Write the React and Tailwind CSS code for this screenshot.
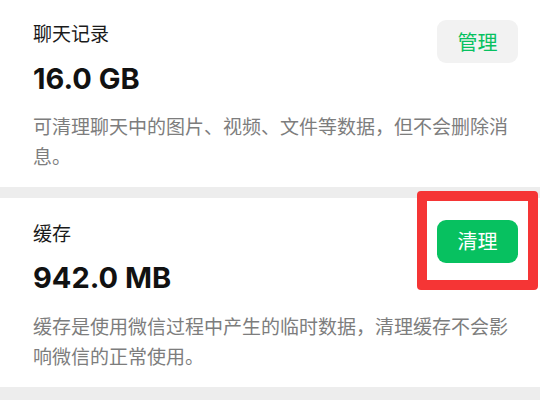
const cjk = { fontFamily: '"Noto Sans CJK SC", "Noto Sans", sans-serif' };
const num = { fontFamily: 'Inter, "Noto Sans CJK SC", sans-serif' };

function StorageItem({ title, size, desc, action, primary, highlight, top }) {
  return (
    <div className={`bg-white pl-[33px] pr-[22px] ${top}`}>
      <div className="flex items-start justify-between">
        <div>
          <p style={cjk} className="text-[19px] leading-[26px] text-[#1a1a1a]">{title}</p>
          <p style={num} className="mt-[14.5px] text-[29px] font-bold leading-[36px] text-[#111111]">{size}</p>
        </div>
        <div className="relative">
          <button
            style={cjk}
            className={
              primary
                ? "w-[81px] h-[43px] rounded-[9px] bg-[#07c160] text-white text-[20px]"
                : "w-[81px] h-[43px] rounded-[9px] bg-[#f2f2f2] text-[#07c160] text-[20px]"
            }
          >
            {action}
          </button>
          {highlight && (
            <div className="absolute -top-[29px] -bottom-[27px] -left-[20px] -right-[20px] border-[10px] border-[#f53535] rounded-[4px] pointer-events-none" />
          )}
        </div>
      </div>
      <p style={cjk} className="mt-[14.5px] pr-[5px] text-[19px] leading-[30px] text-[#7d7d7d]">
        {desc}
      </p>
    </div>
  );
}

export default function App() {
  return (
    <div className="w-[540px] h-[400px] overflow-hidden bg-[#ededed] flex flex-col gap-[11px]">
      <StorageItem
        top="pt-[20px] pb-[15.5px]"
        title="聊天记录"
        size="16.0 GB"
        action="管理"
        desc="可清理聊天中的图片、视频、文件等数据，但不会删除消息。"
      />
      <StorageItem
        top="pt-[22px] pb-[16.5px]"
        title="缓存"
        size="942.0 MB"
        action="清理"
        primary
        highlight
        desc="缓存是使用微信过程中产生的临时数据，清理缓存不会影响微信的正常使用。"
      />
    </div>
  );
}
